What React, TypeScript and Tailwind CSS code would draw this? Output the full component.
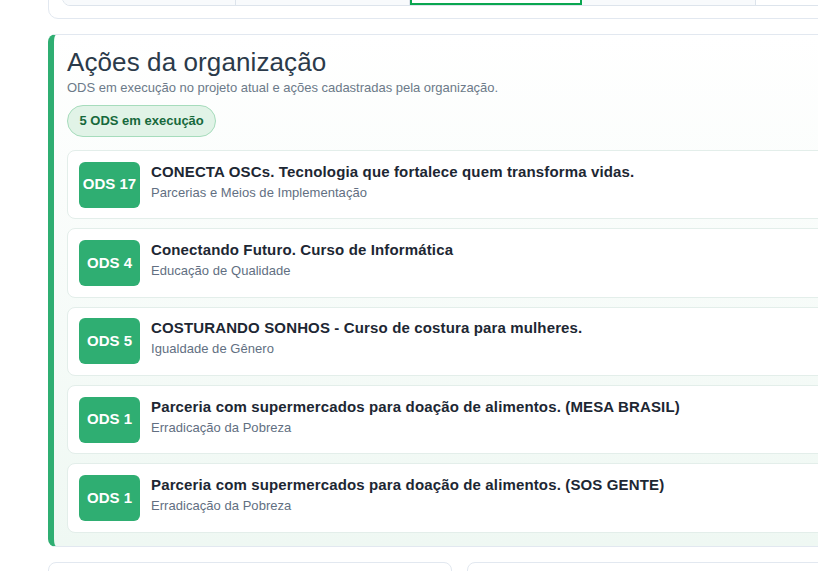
const tabs = [
  "h-full w-[173px] shrink-0 border-r border-[#dde4ec] bg-[#f8fafc]",
  "h-full w-[174px] shrink-0 border-r border-[#dde4ec] bg-[#f8fafc]",
  "h-full w-[172px] shrink-0 border-2 border-[#0aa650] bg-white",
  "h-full w-[174px] shrink-0 border-r border-[#dde4ec] bg-[#f8fafc]",
  "h-full w-[173px] shrink-0 bg-white",
];

const actions = [
  { ods: "ODS 17", title: "CONECTA OSCs. Tecnologia que fortalece quem transforma vidas.", goal: "Parcerias e Meios de Implementação" },
  { ods: "ODS 4", title: "Conectando Futuro. Curso de Informática", goal: "Educação de Qualidade" },
  { ods: "ODS 5", title: "COSTURANDO SONHOS - Curso de costura para mulheres.", goal: "Igualdade de Gênero" },
  { ods: "ODS 1", title: "Parceria com supermercados para doação de alimentos. (MESA BRASIL)", goal: "Erradicação da Pobreza" },
  { ods: "ODS 1", title: "Parceria com supermercados para doação de alimentos. (SOS GENTE)", goal: "Erradicação da Pobreza" },
];

export default function App() {
  return (
    <div className="h-[571px] w-[818px] overflow-hidden bg-white font-['Liberation_Sans',Arial,sans-serif]">
      <div className="-mt-[60px] ml-[48px] flex w-[823px] flex-col gap-[15px]">
        {/* Abas */}
        <div className="h-[79px] shrink-0 rounded-b-[10px] border border-[#e2e8f0] bg-white px-[13px] pt-[13px]">
          <div className="flex h-[52px] overflow-hidden rounded-b-[8px] border border-[#dde4ec]">
            {tabs.map((cls, i) => (
              <div key={i} className={cls} />
            ))}
          </div>
        </div>

        {/* Ações */}
        <div className="flex h-[513px] shrink-0 flex-col rounded-[8px] border border-l-[6px] border-[#e2e8f0] border-l-[#2fae72] bg-gradient-to-b from-white to-[#eff8f3] pl-[13px] pr-[13px] pt-[12px]">
          <h2 className="text-[26px] leading-[31px] tracking-[0.1px] font-normal text-[#2b3a4a]">Ações da organização</h2>
          <p className="mt-[2px] text-[13px] leading-[16px] tracking-[-0.015px] text-[#6c7a89]">
            ODS em execução no projeto atual e ações cadastradas pela organização.
          </p>
          <div className="mt-[9px]">
            <span className="inline-flex h-[32px] items-center rounded-full border border-[#a6dcbc] bg-[#e1f3e7] px-[11.5px] text-[13px] font-bold text-[#17693c]">
              5 ODS em execução
            </span>
          </div>
          <div className="mt-[13px] flex flex-col gap-[9px]">
            {actions.map((a, i) => (
              <div key={i} className="flex h-[69.33px] items-center gap-[11px] rounded-[8px] border border-[#e3eeea] bg-white pl-[11px]">
                <div className="flex h-[46px] w-[61px] shrink-0 items-center justify-center rounded-[6px] bg-[#2fae72] text-[15px] font-bold text-white">
                  {a.ods}
                </div>
                <div className="mb-[6px] flex flex-col gap-[4px]">
                  <div className="text-[15px] leading-[18px] font-bold tracking-[0.14px] text-[#1d2733]">{a.title}</div>
                  <div className="text-[13px] leading-[16px] tracking-[0.04px] text-[#626f82]">{a.goal}</div>
                </div>
              </div>
            ))}
          </div>
        </div>

        {/* Cards seguintes */}
        <div className="flex gap-[15px]">
          <div className="h-[80px] w-[404px] rounded-[8px] border border-[#e2e8f0] bg-white" />
          <div className="h-[80px] w-[404px] rounded-[8px] border border-[#e2e8f0] bg-white" />
        </div>
      </div>
    </div>
  );
}
